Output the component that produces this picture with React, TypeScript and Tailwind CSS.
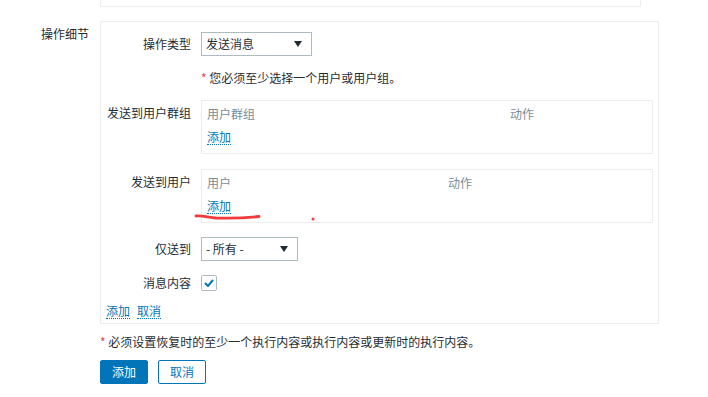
import React from "react";

const font = { fontFamily: '"Noto Sans CJK SC", "Noto Sans", sans-serif' };

const Caret = () => (
  <svg width="8" height="6" viewBox="0 0 8 6" className="shrink-0">
    <path d="M0 0 L8 0 L4 6 Z" fill="#1f2c33" />
  </svg>
);

const Select = ({ value, width }: { value: string; width: string }) => (
  <div
    className={`flex items-center justify-between h-[24px] border border-[#acbbc2] bg-white pl-[4px] pr-[9px] ${width}`}
  >
    <span>{value}</span>
    <Caret />
  </div>
);

const LinkText = ({ children }: { children: React.ReactNode }) => (
  <span className="text-[#0275b8] border-b border-dotted border-[#0275b8] leading-[15px] inline-block">
    {children}
  </span>
);

const Row = ({
  label,
  children,
  className = "",
  labelClass = "",
}: {
  label?: string;
  children: React.ReactNode;
  className?: string;
  labelClass?: string;
}) => (
  <div className={`flex ${className}`}>
    <div className={`w-[100px] shrink-0 pr-[10px] text-right whitespace-nowrap ${labelClass}`}>{label}</div>
    <div className="flex-1">{children}</div>
  </div>
);

const MiniTable = ({ first, firstWidth }: { first: string; firstWidth: string }) => (
  <div className="h-[54px] border border-[#ebeef0] px-[5px] pt-[5px]">
    <div className="flex text-[#768d99] leading-[16px]">
      <div className={firstWidth}>{first}</div>
      <div>动作</div>
    </div>
    <div className="mt-[7px] leading-[16px]">
      <LinkText>添加</LinkText>
    </div>
  </div>
);

export default function App() {
  return (
    <div className="relative w-[708px] h-[397px] bg-white text-[12px] text-[#1f2c33] overflow-hidden" style={font}>
      {/* previous block, cut off at the top */}
      <div className="ml-[100px] w-[541px] h-[7px] border-x border-b border-[#ebeef0]" />

      <div className="flex mt-[14px]">
        <div className="w-[100px] shrink-0 pr-[11px] pt-[4px] text-right">操作细节</div>
        <div className="w-[559px] border border-[#ebeef0] pt-[10px] pb-[4px] pr-[5px]">
          <Row label="操作类型" labelClass="leading-[24px]">
            <Select value="发送消息" width="w-[111px]" />
          </Row>

          <Row className="mt-[10px]">
            <div className="leading-[24px]">
              <span className="text-[#e54251]">*</span> 您必须至少选择一个用户或用户组。
            </div>
          </Row>

          <Row label="发送到用户群组" className="mt-[10px]" labelClass="pt-[5px] leading-[16px]">
            <MiniTable first="用户群组" firstWidth="w-[303px]" />
          </Row>

          <Row label="发送到用户" className="mt-[15px]" labelClass="pt-[5px] leading-[16px]">
            <MiniTable first="用户" firstWidth="w-[241px]" />
          </Row>

          <Row label="仅送到" className="mt-[14px]" labelClass="leading-[24px]">
            <Select value="- 所有 -" width="w-[97px]" />
          </Row>

          <Row label="消息内容" className="mt-[14px]" labelClass="leading-[16px]">
            <div className="w-[16px] h-[16px] border border-[#acbbc2] rounded-[2px] flex items-center justify-center">
              <svg width="10" height="8" viewBox="0 0 10 8">
                <path d="M1 4 L4 7 L9 1" stroke="#0275b8" strokeWidth="2" fill="none" />
              </svg>
            </div>
          </Row>

          <div className="mt-[12px] pl-[5px] flex gap-[7px] leading-[16px]">
            <LinkText>添加</LinkText>
            <LinkText>取消</LinkText>
          </div>
        </div>
      </div>

      <div className="ml-[100px] mt-[10px] leading-[16px]">
        <span className="text-[#e54251]">*</span> 必须设置恢复时的至少一个执行内容或执行内容或更新时的执行内容。
      </div>

      <div className="ml-[100px] mt-[10px] flex gap-[10px]">
        <button className="h-[24px] w-[48px] rounded-[2px] bg-[#0275b8] text-white border border-[#0275b8]">添加</button>
        <button className="h-[24px] w-[48px] rounded-[2px] bg-white text-[#0275b8] border border-[#0275b8]">取消</button>
      </div>

      {/* red hand-drawn annotation */}
      <svg className="absolute left-0 top-0 pointer-events-none" width="708" height="397">
        <path
          d="M196 216 C 204 215.5, 208 217.5, 216 218 C 230 218.5, 245 218, 259 216.5"
          stroke="#ef3b3b"
          strokeWidth="2.8"
          strokeLinecap="round"
          fill="none"
        />
        <circle cx="313" cy="219" r="1.5" fill="#ef3b3b" />
      </svg>
    </div>
  );
}
